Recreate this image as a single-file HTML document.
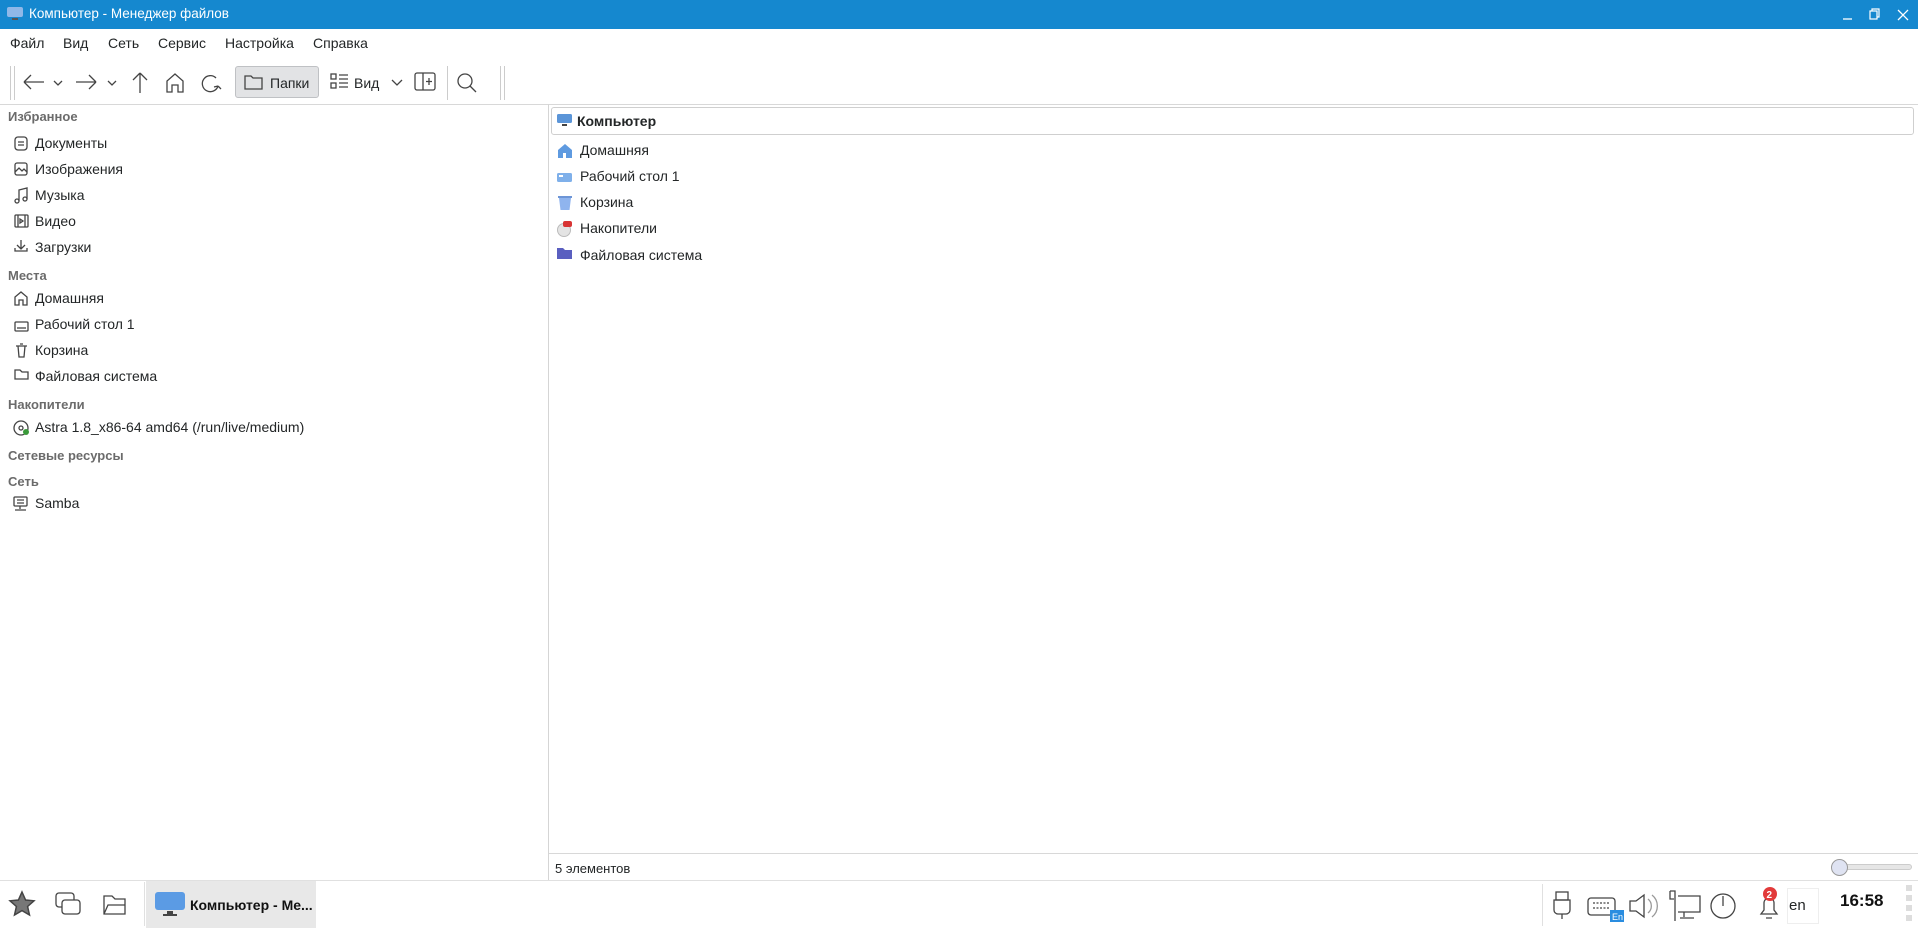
<!DOCTYPE html>
<html><head><meta charset="utf-8"><style>
*{margin:0;padding:0;box-sizing:border-box}
body{width:1918px;height:928px;overflow:hidden;background:#fff;font-family:"Liberation Sans","DejaVu Sans",sans-serif;font-size:14px;color:#232627;position:relative}
.abs{position:absolute}
#title{left:0;top:0;width:1918px;height:29px;background:#1588cf;color:#fff;font-size:13.5px}
#menu span{position:absolute;top:35px;font-size:14px}
svg{position:absolute;overflow:visible}
.ic{fill:none;stroke:#444;stroke-width:1.3}
.sec{position:absolute;left:8px;font-weight:bold;color:#6b6b6b;font-size:13px}
.it{position:absolute;left:35px;font-size:14px}
.rt{position:absolute;left:580px;font-size:14px}
</style></head><body>
<div id="title" class="abs">
<svg style="left:7px;top:7px" width="16" height="14"><rect x="0" y="0" width="16" height="10" rx="2" fill="#8fb8e8"/><rect x="5" y="11" width="6" height="2" fill="#555"/></svg>
<span class="abs" style="left:29px;top:6px">Компьютер - Менеджер файлов</span>
<svg style="left:1840px;top:8px" width="70" height="14"><path d="M3 11h9" stroke="#fff" stroke-width="1.3"/><rect x="30" y="3" width="7" height="8" fill="none" stroke="#fff" stroke-width="1.2"/><path d="M32 3V1h7v8h-2" fill="none" stroke="#fff" stroke-width="1.2"/><path d="M58 2l10 10M68 2L58 12" stroke="#fff" stroke-width="1.3"/></svg>
</div>
<div id="menu"><span style="left:10px">Файл</span><span style="left:63px">Вид</span><span style="left:108px">Сеть</span><span style="left:158px">Сервис</span><span style="left:225px">Настройка</span><span style="left:313px">Справка</span></div>
<div class="abs" style="left:10px;top:66px;width:1px;height:34px;background:#ccc"></div>
<div class="abs" style="left:14px;top:66px;width:1px;height:34px;background:#ccc"></div>
<svg style="left:20px;top:72px" width="480" height="24">
<g class="ic" stroke="#888"><path d="M4 10h20M4 10l7-7M4 10l7 7"/><path d="M34 9l4 4 4-4"/><path d="M56 10h20M76 10l-7-7M76 10l-7 7"/><path d="M88 9l4 4 4-4"/><path d="M120 1v20M120 1l-7 7M120 1l7 7"/></g>
<g class="ic"><path d="M147 20V9l8-7 8 7v11h-5v-7h-6v7z"/><path d="M198 14a8 8 0 1 1-2-8M198 14l3 3M198 14l-4 1"/></g>
</svg>
<div class="abs" style="left:235px;top:66px;width:84px;height:32px;background:#e2e3e5;border:1px solid #bfc1c4;border-radius:3px"></div>
<svg style="left:244px;top:73px" width="20" height="18"><path class="ic" d="M1 3h6l2 2h9v11H1z"/></svg>
<span class="abs" style="left:270px;top:75px">Папки</span>
<svg style="left:330px;top:73px" width="20" height="18"><rect class="ic" x="1" y="1" width="5" height="5"/><rect class="ic" x="1" y="10" width="5" height="5"/><path class="ic" d="M9 2h9M9 6h9M9 10h9M9 14h9"/></svg>
<span class="abs" style="left:354px;top:75px">Вид</span>
<svg style="left:390px;top:78px" width="14" height="10"><path class="ic" d="M2 2l5 5 5-5"/></svg>
<svg style="left:414px;top:72px" width="22" height="20"><rect class="ic" x="1" y="1" width="20" height="17" rx="2"/><path class="ic" d="M9 1v17M15 6v7M12 9.5h6"/></svg>
<div class="abs" style="left:447px;top:66px;width:1px;height:34px;background:#ccc"></div>
<svg style="left:456px;top:72px" width="22" height="22"><circle class="ic" cx="9" cy="9" r="7"/><path class="ic" d="M14 14l6 6"/></svg>
<div class="abs" style="left:500px;top:66px;width:1px;height:34px;background:#ccc"></div>
<div class="abs" style="left:504px;top:66px;width:1px;height:34px;background:#ccc"></div>
<div class="abs" style="left:0;top:104px;width:1918px;height:1px;background:#d8d8d8"></div>
<div class="abs" style="left:548px;top:104px;width:1px;height:777px;background:#d5d5d5"></div>
<div class="sec" style="top:109px">Избранное</div>
<svg style="left:14px;top:136px" width="16" height="130">
<g class="ic" stroke="#555"><rect x="1" y="1" width="12" height="13" rx="3"/><path d="M4 6h6M4 9h6"/>
<rect x="1" y="27" width="12" height="12" rx="2"/><path d="M1 36l4-4 3 3 2-2 3 3"/>
<path d="M5 65V54l8-2v11"/><circle cx="3" cy="65" r="2"/><circle cx="11" cy="63" r="2"/>
<rect x="1" y="79" width="13" height="12" rx="1"/><path d="M4 79v12M11 79v12M6 83l3 2-3 2z"/>
<path d="M7 104v9M3 109l4 4 4-4M1 112v3h12v-3"/></g></svg>
<div class="it" style="top:135px">Документы</div>
<div class="it" style="top:161px">Изображения</div>
<div class="it" style="top:187px">Музыка</div>
<div class="it" style="top:213px">Видео</div>
<div class="it" style="top:239px">Загрузки</div>
<div class="sec" style="top:268px">Места</div>
<svg style="left:14px;top:291px" width="16" height="90"><g class="ic" stroke="#555"><path d="M1 14V6l6-5 6 5v8h-4V9H5v5z"/><rect x="1" y="31" width="13" height="9" rx="1"/><path d="M3 37h9"/><path d="M2 55h11M4 55l1 11h5l1-11M6 53h3"/><path d="M1 88V79h5l2 2h6v7z"/></g></svg>
<div class="it" style="top:290px">Домашняя</div>
<div class="it" style="top:316px">Рабочий стол 1</div>
<div class="it" style="top:342px">Корзина</div>
<div class="it" style="top:368px">Файловая система</div>
<div class="sec" style="top:397px">Накопители</div>
<svg style="left:13px;top:420px" width="16" height="16"><circle class="ic" stroke="#555" cx="8" cy="8" r="7"/><circle class="ic" stroke="#555" cx="8" cy="8" r="2"/><circle cx="13" cy="12" r="3" fill="#3a9a3a"/></svg>
<div class="it" style="top:419px">Astra 1.8_x86-64 amd64 (/run/live/medium)</div>
<div class="sec" style="top:448px">Сетевые ресурсы</div>
<div class="sec" style="top:474px">Сеть</div>
<svg style="left:13px;top:496px" width="16" height="16"><g class="ic" stroke="#555"><rect x="1" y="1" width="13" height="9" rx="1"/><path d="M4 4h7M4 7h7M7 10v3M2 14h11"/></g></svg>
<div class="it" style="top:495px">Samba</div>
<div class="abs" style="left:551px;top:107px;width:1363px;height:28px;border:1px solid #cfcfcf;border-radius:3px"></div>
<svg style="left:557px;top:114px" width="16" height="14"><rect x="0" y="0" width="15" height="9" rx="1.5" fill="#5b95d8"/><rect x="5" y="10" width="5" height="2" fill="#444"/></svg>
<span class="abs" style="left:577px;top:113px;font-weight:bold">Компьютер</span>
<svg style="left:557px;top:143px" width="16" height="120">
<path d="M1 7l7-6 7 6v8H1z" fill="#5e9ae0"/><rect x="6" y="10" width="3" height="5" fill="#fff"/>
<rect x="0" y="30" width="15" height="9" rx="1.5" fill="#7fb0ea"/><rect x="2" y="32" width="4" height="2" fill="#fff"/>
<path d="M2 55h12l-1.5 12h-9z" fill="#8fb4ee"/><rect x="1" y="53" width="14" height="2" fill="#6d95d6"/>
<circle cx="7" cy="87" r="6.5" fill="#e4e4e4" stroke="#bbb"/><rect x="6" y="78" width="9" height="6" rx="2" fill="#d83434"/>
<path d="M0 105h6l2 2h7v9H0z" fill="#5a5fc0"/></svg>
<div class="rt" style="top:142px">Домашняя</div>
<div class="rt" style="top:168px">Рабочий стол 1</div>
<div class="rt" style="top:194px">Корзина</div>
<div class="rt" style="top:220px">Накопители</div>
<div class="rt" style="top:247px">Файловая система</div>
<div class="abs" style="left:549px;top:853px;width:1369px;height:1px;background:#d8d8d8"></div>
<span class="abs" style="left:555px;top:861px;font-size:13px">5 элементов</span>
<div class="abs" style="left:1838px;top:864px;width:74px;height:6px;border-radius:3px;background:#e6e6e6;border:1px solid #ccc"></div>
<div class="abs" style="left:1831px;top:859px;width:17px;height:17px;border-radius:50%;background:#dfe3f2;border:1px solid #999"></div>
<div class="abs" style="left:0;top:880px;width:1918px;height:1px;background:#e0e0e0"></div>
<svg style="left:8px;top:890px" width="120" height="30">
<path d="M14 2l3.6 8 8.4.8-6.4 5.7 1.9 8.5L14 20.6 6.5 25l1.9-8.5L2 10.8l8.4-.8z" fill="#777" stroke="#444" stroke-width="1.5"/>
<g class="ic" stroke="#444" stroke-width="1.8"><rect x="48" y="3" width="18" height="14" rx="3"/><rect x="54" y="10" width="18" height="14" rx="3" fill="#fff"/>
<path d="M96 24V6h8l3 3h10v15zM96 24l4-9h17v9"/></g></svg>
<div class="abs" style="left:144px;top:882px;width:1px;height:44px;background:#e0e0e0"></div>
<div class="abs" style="left:146px;top:881px;width:170px;height:47px;background:#e8e8e8"></div>
<svg style="left:155px;top:892px" width="32" height="26"><rect x="0" y="0" width="30" height="18" rx="3" fill="#5b9be4"/><rect x="12" y="19" width="6" height="3" fill="#444"/><rect x="8" y="22" width="14" height="2" fill="#444"/></svg>
<span class="abs" style="left:190px;top:897px;font-weight:bold;font-size:14px;color:#111">Компьютер - Ме...</span>
<div class="abs" style="left:1542px;top:884px;width:1px;height:42px;background:#e0e0e0"></div>
<svg style="left:1550px;top:886px" width="300" height="40"><g class="ic" stroke="#333" stroke-width="1.6">
<rect x="6" y="6" width="12" height="8"/><path d="M4 14h16v10a4 4 0 0 1-4 4H8a4 4 0 0 1-4-4z M12 28v5"/>
<rect x="38" y="12" width="27" height="17" rx="3"/><path d="M43 17h17M43 22h17" stroke-dasharray="2 1.5"/>
<path d="M80 15h6l8-6v22l-8-6h-6z"/><path d="M98 13a9 9 0 0 1 0 14M102 9a14 14 0 0 1 0 22" stroke="#999"/>
<path d="M120 5v8h4M120 5h5v30M128 10h22v16h-22M134 26v5M130 32h14"/>
<circle cx="173" cy="20" r="12"/><path d="M173 10v10"/>
<path d="M211 28h16l-3-4v-7a5 5 0 0 0-10 0v7zM216 32h6"/></g>
<rect x="60" y="24" width="14" height="12" fill="#2a8de0"/><text x="62" y="34" font-size="9" fill="#fff" font-family="Liberation Sans">En</text>
<circle cx="220" cy="8" r="7" fill="#e23a3a"/><text x="216.5" y="12" font-size="10" font-weight="bold" fill="#fff" font-family="Liberation Sans">2</text></svg>
<div class="abs" style="left:1787px;top:888px;width:32px;height:36px;border:1px solid #eee"></div>
<span class="abs" style="left:1789px;top:897px;font-size:15px">en</span>
<span class="abs" style="left:1840px;top:891px;font-size:17px;font-weight:bold;color:#111">16:58</span>
<div class="abs" style="left:1906px;top:885px;width:6px;height:40px;background:repeating-linear-gradient(#ddd 0 6px,#fff 6px 10px)"></div>
</body></html>
